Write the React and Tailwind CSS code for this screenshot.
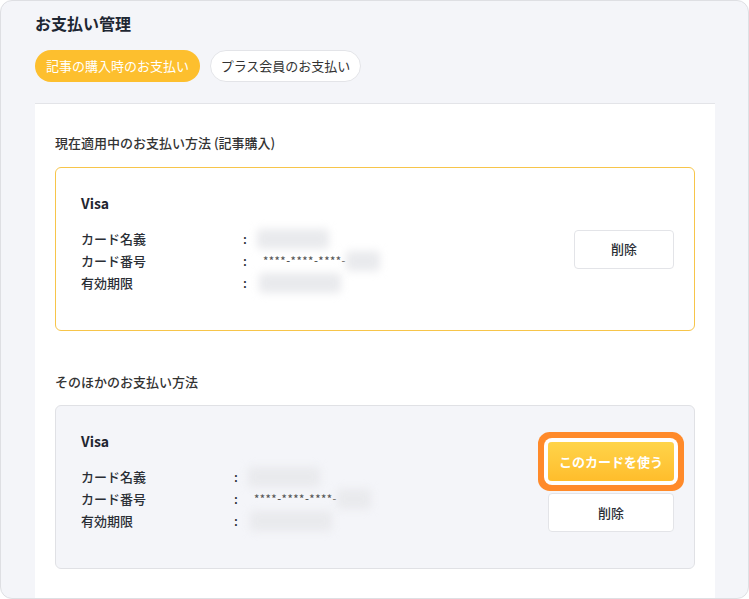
const font = { fontFamily: '"Noto Sans CJK JP", "Noto Sans", sans-serif' };

function Blur({ className }) {
  return (
    <span className={`inline-block h-[20px] rounded-sm bg-[#e9eaed] blur-[4px] ${className}`} />
  );
}

function CardInfo({ labelWidth }) {
  const rows = [
    { label: "カード名義", value: <Blur className="ml-[10px] w-[72px]" /> },
    {
      label: "カード番号",
      value: (
        <span className="ml-[16px] flex items-center">
          <span className="text-[11px] tracking-[0.5px] text-[#555]">****-****-****-</span>
          <Blur className="w-[34px]" />
        </span>
      ),
    },
    { label: "有効期限", value: <Blur className="ml-[12px] w-[82px]" /> },
  ];
  return (
    <div className="flex flex-col">
      <div className="text-[14px] font-bold leading-[20px] text-[#1f2630]">Visa</div>
      <div className="mt-[15px] flex flex-col">
        {rows.map((r) => (
          <div key={r.label} className="flex h-[22px] items-center text-[13px] font-medium text-[#2a2e35]">
            <span className={labelWidth}>{r.label}</span>
            <span>:</span>
            {r.value}
          </div>
        ))}
      </div>
    </div>
  );
}

export default function App() {
  return (
    <div className="h-[599px] w-[749px] bg-white" style={font}>
      <div className="flex h-[599px] w-[749px] flex-col overflow-hidden rounded-[12px] border border-[#dedfe3] bg-[#f4f5f9] pl-[34px] pr-[33px]">
        <h1 className="mt-[11px] text-[16px] font-bold leading-[22px] text-[#1e2733]">お支払い管理</h1>
        <div className="mt-[16px] flex gap-[10px]">
          <button className="h-[32px] w-[165px] rounded-full bg-[#fdbf2e] text-[13px] text-white">
            記事の購入時のお支払い
          </button>
          <button className="h-[32px] w-[151px] rounded-full border border-[#e3e4e8] bg-white text-[13px] text-[#333]">
            プラス会員のお支払い
          </button>
        </div>
        <div className="mt-[21px] flex-1 border-t border-[#e3e4e8] bg-white px-[20px]">
          <h2 className="mt-[30px] text-[13px] font-medium leading-[18px] text-[#333]">
            現在適用中のお支払い方法 (記事購入)
          </h2>
          <div className="mt-[15px] flex h-[164px] items-center justify-between rounded-[6px] border border-[#f7c54a] bg-white pl-[25px] pr-[20px]">
            <div className="pb-[12px]">
              <CardInfo labelWidth="w-[162px]" />
            </div>
            <button className="h-[39px] w-[100px] rounded-[4px] border border-[#e3e4e8] bg-white text-[13px] font-medium text-[#2a2e35]">
              削除
            </button>
          </div>
          <h2 className="mt-[42px] text-[13px] font-medium leading-[18px] text-[#333]">そのほかのお支払い方法</h2>
          <div className="mt-[14px] flex h-[164px] items-center justify-between rounded-[6px] border border-[#e0e1e5] bg-[#f4f5f9] pl-[25px] pr-[20px]">
            <div className="pb-[12px]">
              <CardInfo labelWidth="w-[153px]" />
            </div>
            <div className="flex flex-col gap-[12px]">
              <button className="h-[39px] w-[126px] rounded-[4px] bg-gradient-to-b from-[#ffd449] to-[#ffbd2b] text-[13px] font-bold text-white shadow-[0_0_0_4px_#fff,0_0_0_10px_#ff8a2a]">
                このカードを使う
              </button>
              <button className="h-[39px] w-[126px] rounded-[4px] border border-[#e3e4e8] bg-white text-[13px] font-medium text-[#2a2e35]">
                削除
              </button>
            </div>
          </div>
        </div>
      </div>
    </div>
  );
}
